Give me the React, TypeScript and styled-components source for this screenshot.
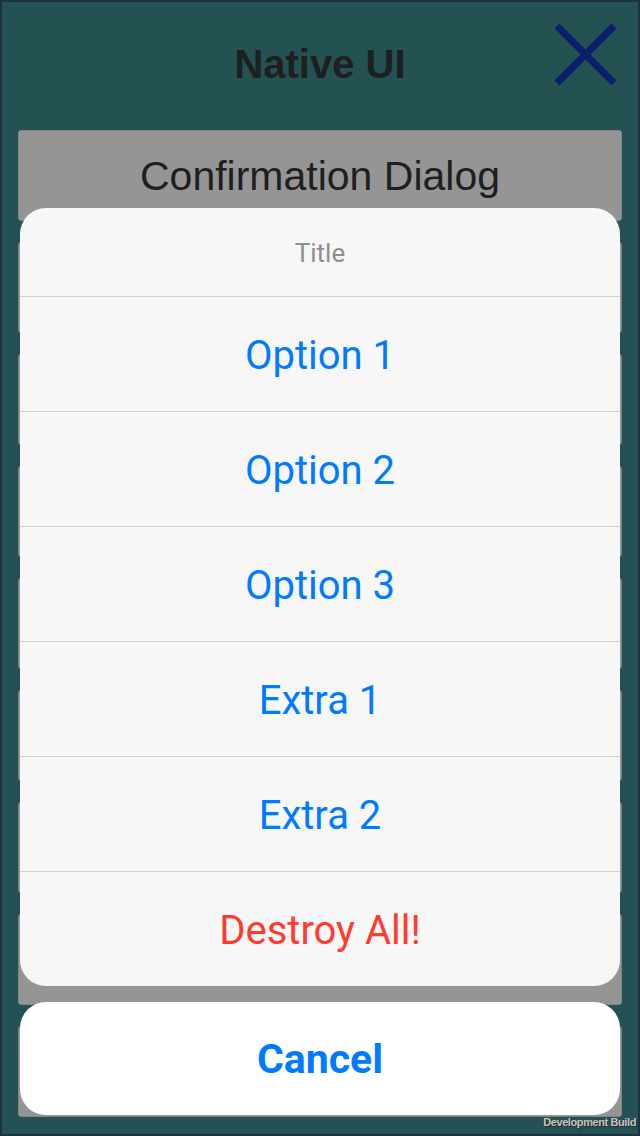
import React from "react";
import styled, { createGlobalStyle } from "styled-components";

const Global = createGlobalStyle`
  html, body { margin: 0; padding: 0; background: #235050; }
  * { box-sizing: border-box; }
`;

const Screen = styled.div`
  position: relative;
  width: 640px;
  height: 1136px;
  overflow: hidden;
  background: #245151;
  border: 2px solid #1c3145;
  font-family: "Liberation Sans", Arial, sans-serif;
`;

const Header = styled.header`
  position: relative;
  height: 128px;
  display: flex;
  align-items: center;
  justify-content: center;
  padding-bottom: 4px;
`;

const Title = styled.h1`
  margin: 0;
  font-size: 40px;
  font-weight: 700;
  line-height: 1;
  color: #1e1f1f;
`;

const CloseButton = styled.button`
  position: absolute;
  top: 21px;
  right: 21px;
  width: 63px;
  height: 63px;
  padding: 0;
  border: 0;
  background: transparent;
  display: flex;
`;

const ButtonList = styled.div`
  display: flex;
  flex-direction: column;
  gap: 21px;
  padding: 0 16px;
`;

const MenuButton = styled.div`
  height: 91px;
  flex-shrink: 0;
  border-radius: 3px;
  background: #959595;
  border: 1px solid #838383;
  display: flex;
  align-items: center;
  justify-content: center;
  font-size: 41px;
  color: #1f1f1f;
  padding-top: 2px;
`;

const Overlay = styled.div`
  position: absolute;
  left: 18px;
  right: 18px;
  bottom: 19px;
  display: flex;
  flex-direction: column;
  gap: 16px;
  font-family: Roboto, "Liberation Sans", Arial, sans-serif;
`;

const Sheet = styled.div`
  background: #f7f7f7;
  border-radius: 26px;
  overflow: hidden;
  display: flex;
  flex-direction: column;
`;

const SheetTitle = styled.div`
  height: 88px;
  display: flex;
  align-items: center;
  justify-content: center;
  font-size: 26px;
  color: #8e8e8e;
  padding-top: 2px;
`;

const SheetRow = styled.div<{ $danger?: boolean }>`
  height: 115px;
  border-top: 1px solid #d2d2d4;
  display: flex;
  align-items: center;
  justify-content: center;
  font-size: 40px;
  padding-top: 2px;
  color: ${(p) => (p.$danger ? "#ff3b30" : "#007aff")};
`;

const CancelButton = styled.div`
  height: 113px;
  background: #ffffff;
  border-radius: 26px;
  display: flex;
  align-items: center;
  justify-content: center;
  font-size: 41px;
  font-weight: 700;
  color: #007aff;
`;

const BuildLabel = styled.div`
  position: absolute;
  right: 2px;
  bottom: 6px;
  font-family: "Liberation Sans", Arial, sans-serif;
  font-size: 11px;
  font-weight: 700;
  letter-spacing: -0.4px;
  color: #c4c4c4;
  text-shadow: 1px 1px 0 #2a2a2a;
`;

const options = ["Option 1", "Option 2", "Option 3", "Extra 1", "Extra 2"];

export default function App() {
  return (
    <>
      <Global />
      <Screen>
        <Header>
          <Title>Native UI</Title>
          <CloseButton aria-label="Close">
            <svg width="63" height="63" viewBox="0 0 63 63">
              <line x1="3" y1="3" x2="60" y2="60" stroke="#0b1f6c" strokeWidth="7" />
              <line x1="60" y1="3" x2="3" y2="60" stroke="#0b1f6c" strokeWidth="7" />
            </svg>
          </CloseButton>
        </Header>
        <ButtonList>
          <MenuButton>Confirmation Dialog</MenuButton>
          {Array.from({ length: 8 }).map((_, i) => (
            <MenuButton key={i} />
          ))}
        </ButtonList>
        <Overlay>
          <Sheet>
            <SheetTitle>Title</SheetTitle>
            {options.map((o) => (
              <SheetRow key={o}>{o}</SheetRow>
            ))}
            <SheetRow $danger>Destroy All!</SheetRow>
          </Sheet>
          <CancelButton>Cancel</CancelButton>
        </Overlay>
        <BuildLabel>Development Build</BuildLabel>
      </Screen>
    </>
  );
}
